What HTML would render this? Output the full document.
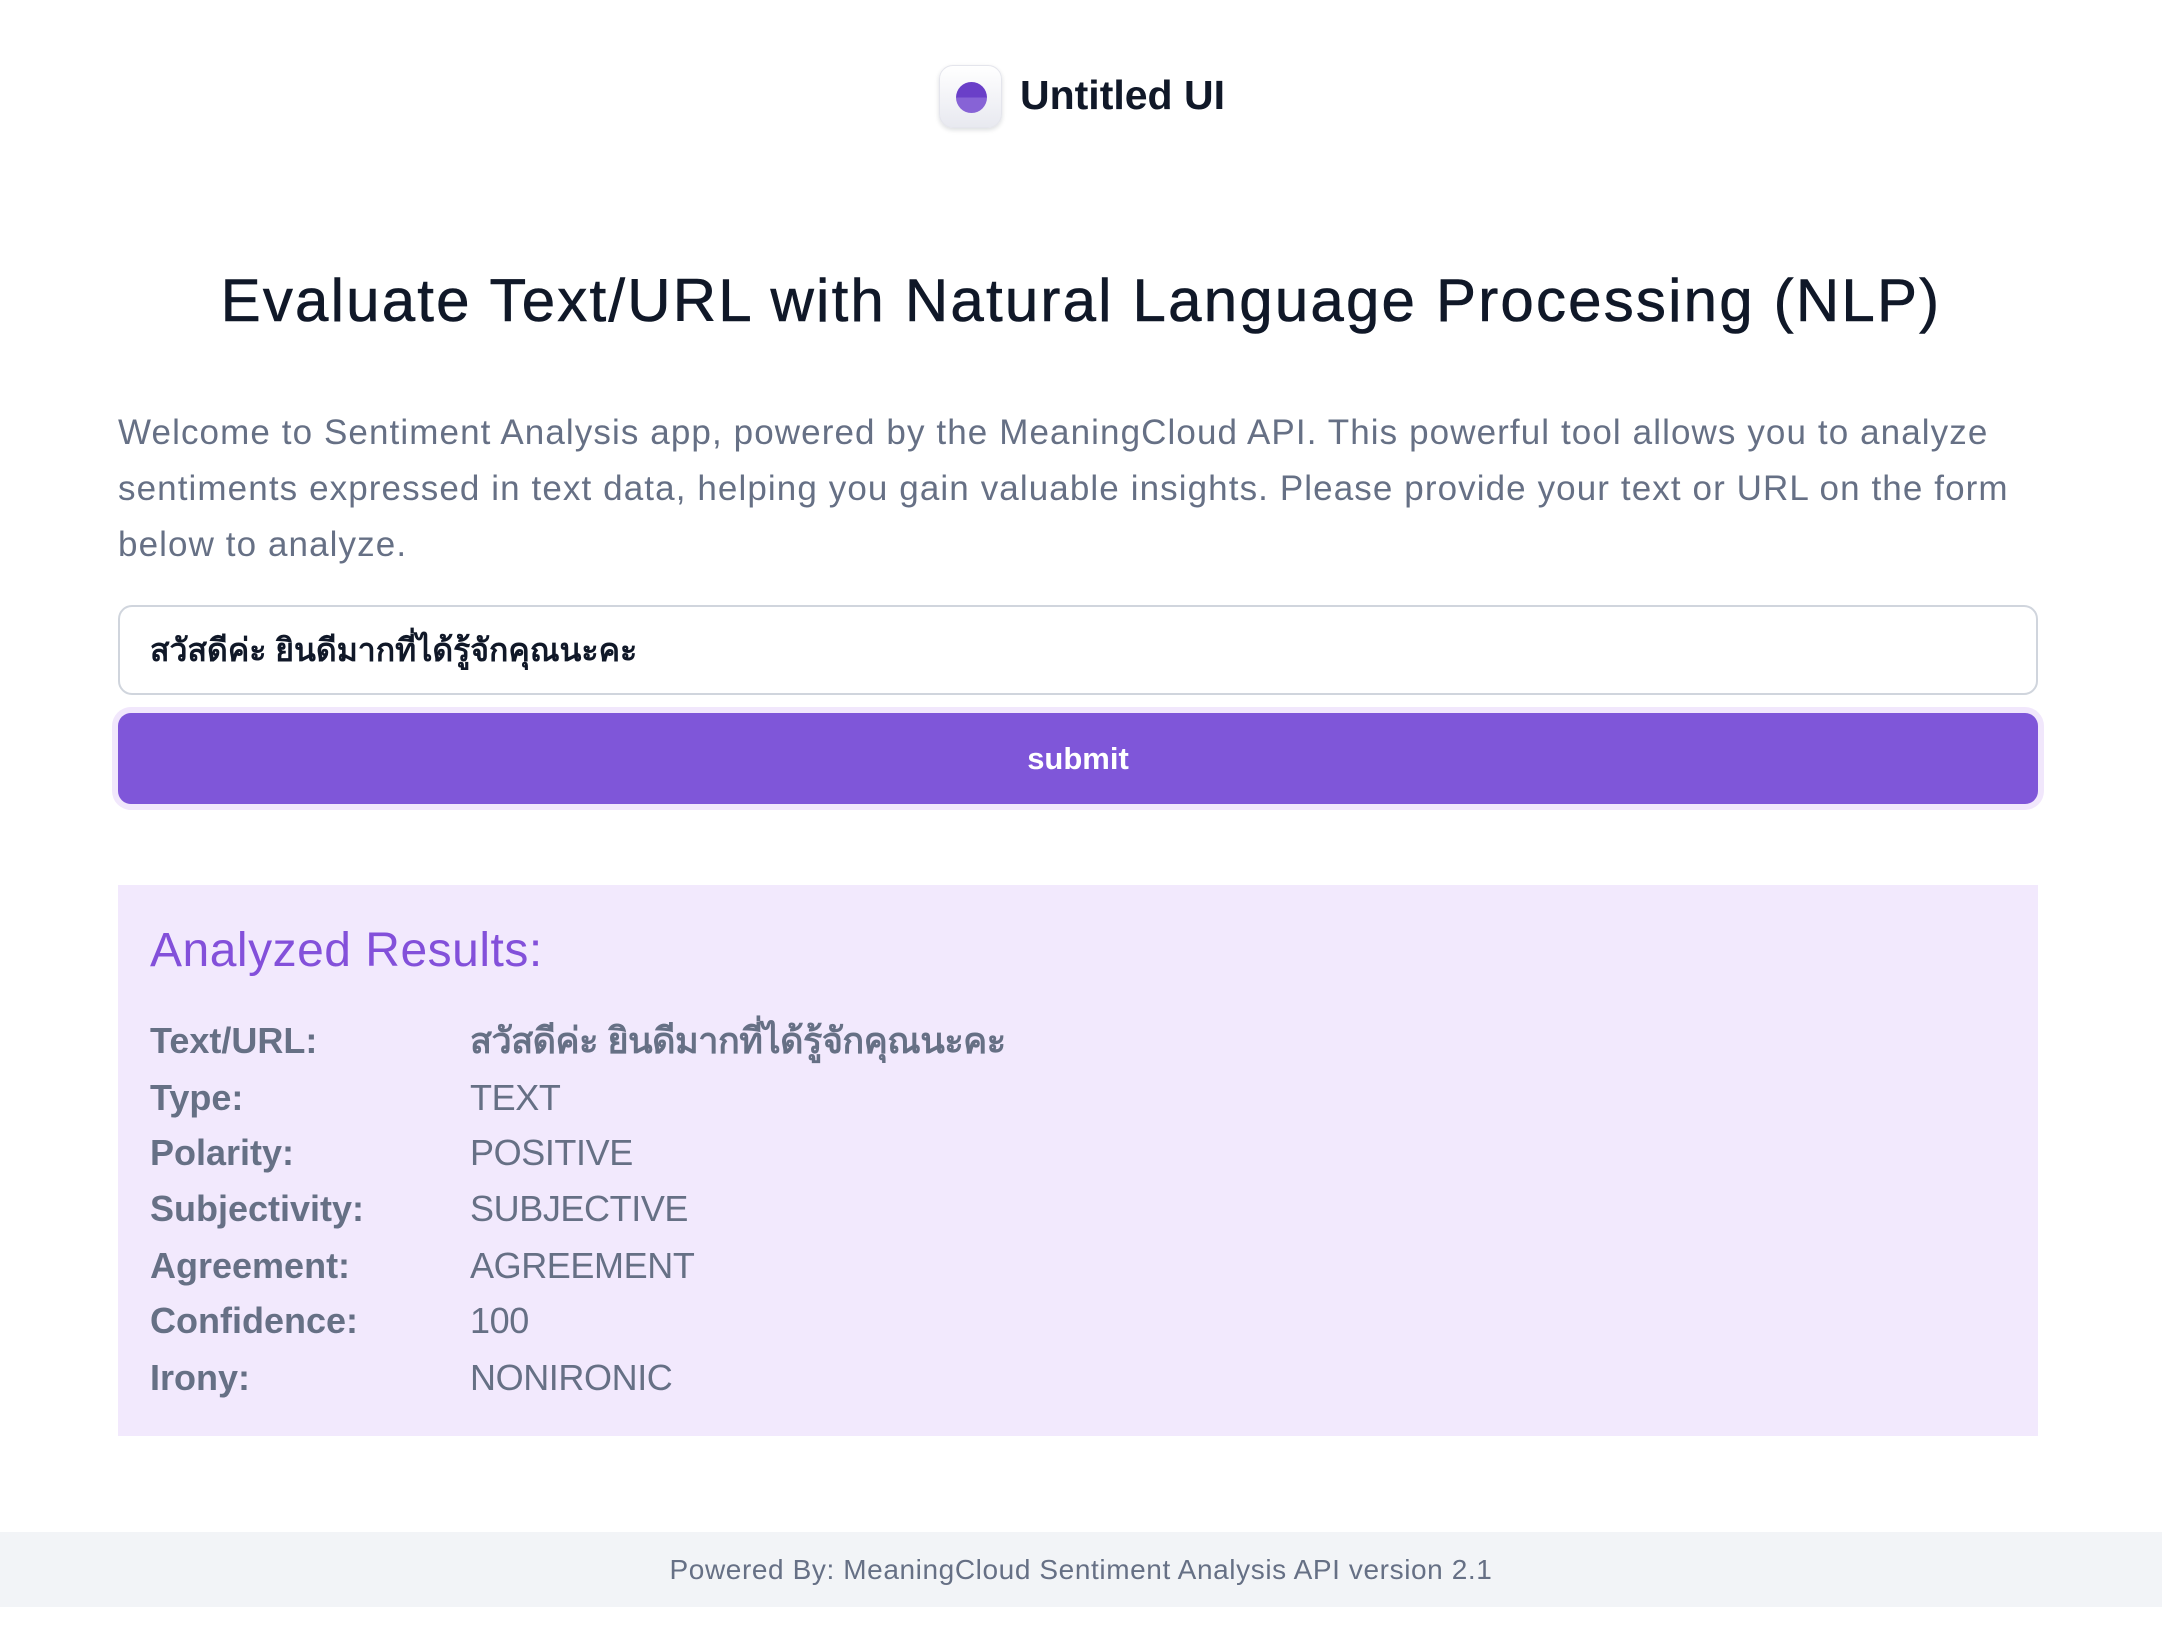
<!DOCTYPE html>
<html><head><meta charset="utf-8"><style>
*{box-sizing:border-box;margin:0;padding:0}
body{width:2162px;height:1636px;background:#fff;font-family:"Liberation Sans","Noto Sans CJK SC",sans-serif;position:relative;overflow:hidden;color:#101828}
.logo{position:absolute;left:939px;top:65px;width:63px;height:63px;border-radius:14px;background:linear-gradient(#fff,#e8e9f0);box-shadow:0 2px 5px rgba(16,24,40,.15);border:1px solid #e4e5ec}
.logo i{position:absolute;left:16px;top:16px;width:31px;height:31px;border-radius:50%;background:linear-gradient(#6a3fc8 50%,#8763d6 50%)}
.brand{position:absolute;left:1020px;top:72px;font-size:41px;font-weight:bold;color:#101828}
h1{position:absolute;left:0;width:2162px;text-align:center;top:266px;font-size:60px;font-weight:normal;color:#101828;letter-spacing:2.2px;-webkit-text-stroke:0.6px #101828}
p.intro{position:absolute;left:118px;width:1930px;top:405px;font-size:35px;line-height:56px;color:#667085;letter-spacing:1.1px}
.input{position:absolute;left:118px;top:605px;width:1920px;height:90px;border:2px solid #d0d5dd;border-radius:14px;padding-left:30px;line-height:86px;font-size:32px;font-weight:bold;color:#101828}
.btn{position:absolute;left:118px;top:713px;width:1920px;height:91px;border-radius:13px;background:#7f56d9;box-shadow:0 0 0 6px #f1e7fc;color:#fff;text-align:center;line-height:91px;font-size:31px;font-weight:bold}
.res{position:absolute;left:118px;top:885px;width:1920px;height:551px;background:#f2e9fd}
.res h2{position:absolute;left:32px;top:38px;font-size:48px;font-weight:normal;color:#8350da;letter-spacing:0.5px}
.row{position:absolute;left:32px;font-size:36px;color:#667085;height:56px;line-height:56px}
.row b{display:inline-block;width:320px}
.row span{letter-spacing:-0.4px}
footer{position:absolute;left:0;top:1532px;width:2162px;height:75px;background:#f2f4f7;text-align:center;line-height:75px;font-size:28px;color:#667085;letter-spacing:0.6px}
</style></head><body>
<div class="logo"><i></i></div>
<div class="brand">Untitled UI</div>
<h1>Evaluate Text/URL with Natural Language Processing (NLP)</h1>
<p class="intro">Welcome to Sentiment Analysis app, powered by the MeaningCloud API. This powerful tool allows you to analyze sentiments expressed in text data, helping you gain valuable insights. Please provide your text or URL on the form below to analyze.</p>
<div class="input">สวัสดีค่ะ ยินดีมากที่ได้รู้จักคุณนะคะ</div>
<div class="btn">submit</div>
<div class="res">
<h2>Analyzed Results:</h2>
<div class="row" style="top:128px"><b>Text/URL:</b><span style="font-weight:bold;letter-spacing:-0.5px">สวัสดีค่ะ ยินดีมากที่ได้รู้จักคุณนะคะ</span></div>
<div class="row" style="top:185px"><b>Type:</b><span>TEXT</span></div>
<div class="row" style="top:240px"><b>Polarity:</b><span>POSITIVE</span></div>
<div class="row" style="top:296px"><b>Subjectivity:</b><span>SUBJECTIVE</span></div>
<div class="row" style="top:353px"><b>Agreement:</b><span>AGREEMENT</span></div>
<div class="row" style="top:408px"><b>Confidence:</b><span>100</span></div>
<div class="row" style="top:465px"><b>Irony:</b><span>NONIRONIC</span></div>
</div>
<footer>Powered By: MeaningCloud Sentiment Analysis API version 2.1</footer>
</body></html>
